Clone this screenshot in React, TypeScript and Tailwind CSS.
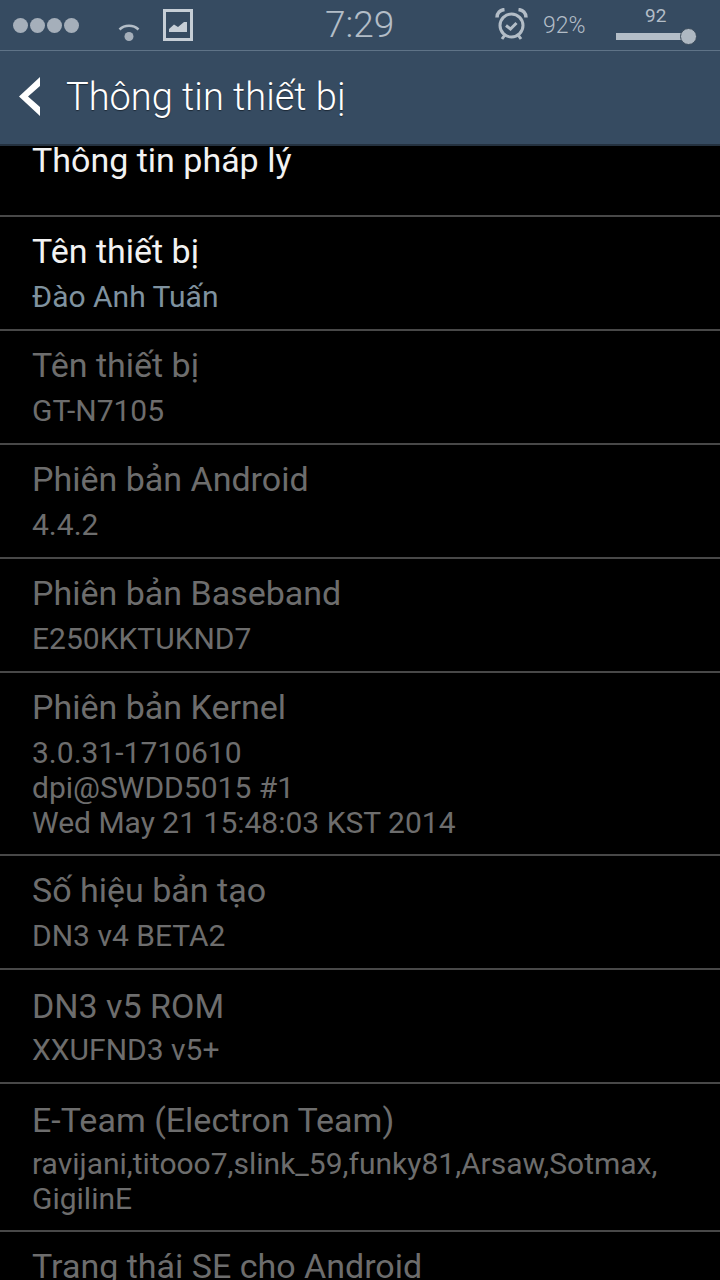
const rows = [
  { title: 'Tên thiết bị', lines: ['GT-N7105'] },
  { title: 'Phiên bản Android', lines: ['4.4.2'] },
  { title: 'Phiên bản Baseband', lines: ['E250KKTUKND7'] },
  { title: 'Phiên bản Kernel', lines: ['3.0.31-1710610', 'dpi@SWDD5015 #1', 'Wed May 21 15:48:03 KST 2014'] },
  { title: 'Số hiệu bản tạo', lines: ['DN3 v4 BETA2'] },
  { title: 'DN3 v5 ROM', lines: ['XXUFND3 v5+'], low: true },
  { title: 'E-Team (Electron Team)', lines: ['ravijani,titooo7,slink_59,funky81,Arsaw,Sotmax,', 'GigilinE'], low: true },
  { title: 'Trạng thái SE cho Android', lines: [] },
]

const StatusBar = () => (
  <div className="relative flex h-[51px] items-center border-b border-[#5f7387] text-[#b3bdc7]">
    {/* Signal */}
    <div className="ml-[13px] flex gap-[2px]">
      <div className="h-[15px] w-[15px] rounded-full bg-[#a5afba]" />
      <div className="h-[15px] w-[15px] rounded-full bg-[#a5afba]" />
      <div className="h-[15px] w-[15px] rounded-full bg-[#a5afba]" />
      <div className="h-[15px] w-[15px] rounded-full bg-[#a5afba]" />
    </div>
    {/* Wifi */}
    <svg className="ml-[39px] mt-[14px]" width="22" height="20" viewBox="0 0 22 20" fill="none">
      <path d="M1.5 7.5C6.5 2.5 15.5 2.5 20.5 7.5" stroke="#b3bdc7" strokeWidth="2.5" />
      <circle cx="11" cy="14.5" r="4.5" fill="#a5afba" />
    </svg>
    {/* Picture */}
    <svg className="ml-[23px] -mt-[1px]" width="30" height="32" viewBox="0 0 30 32" fill="none">
      <rect x="1.5" y="1.5" width="27" height="29" stroke="#c6ced6" strokeWidth="3" />
      <path d="M6 23L6 20L11 15.5L15 18L21 13L24 13L24 23Z" fill="#c6ced6" />
    </svg>
    <div className="absolute left-[325px] top-[5px] font-['Roboto',sans-serif] text-[37px] font-light leading-[40px]">7:29</div>
    {/* Alarm */}
    <svg className="ml-[302px] -mt-[2px]" width="33" height="33" viewBox="0 0 33 33" fill="none" stroke="#b3bdc7">
      <circle cx="16.5" cy="17.5" r="11.5" strokeWidth="3" />
      <path d="M11 17.5L15.5 21L21.5 15" strokeWidth="3" />
      <path d="M2 9.5C2 5 5 2 9.5 1.5M31 9.5C31 5 28 2 23.5 1.5" strokeWidth="3.5" />
      <path d="M7 31L9.5 27.5M26 31L23.5 27.5" strokeWidth="3" />
    </svg>
    <div className="ml-[15px] mt-[2px] font-['Roboto',sans-serif] text-[23px] font-light leading-[30px]">92%</div>
    <div className="absolute left-[645px] top-[6px] font-['Roboto',sans-serif] text-[19px] leading-[20px]">92</div>
    {/* Brightness slider */}
    <div className="absolute left-[616px] top-[28px] flex items-center">
      <div className="h-[7px] w-[66px] bg-[#b3bdc7]" />
      <div className="-ml-[2px] h-[17px] w-[17px] rounded-full border border-[#3a4a5a] bg-[#aeb8c2]" />
    </div>
  </div>
)

const TitleBar = () => (
  <div className="flex h-[95px] items-center border-b-2 border-[#24313f] pb-[1px]">
    <svg className="ml-[18px]" width="24" height="40" viewBox="0 0 24 40" fill="#ffffff">
      <path d="M22 0L22 9L10 19.5L22 30L22 39L1 19.5Z" />
    </svg>
    <div className="ml-[24px] font-['Roboto',sans-serif] text-[38px] font-light leading-[44px] text-white [text-shadow:0_1px_1px_#1c2835]">
      Thông tin thiết bị
    </div>
  </div>
)

export default function App() {
  return (
    <div className="flex h-[1280px] w-[720px] flex-col overflow-hidden bg-black font-['Roboto',sans-serif]">
      <div className="shrink-0 bg-[#364b61]">
        <StatusBar />
        <TitleBar />
      </div>
      <div className="flex flex-col">
        <div className="h-[71px] border-b-2 border-[#484848] pl-[32px] text-[34px] leading-[28px] text-[#f2f2f2]">
          Thông tin pháp lý
        </div>
        <div className="h-[114px] border-b-2 border-[#484848] pl-[32px] pt-[12px]">
          <div className="text-[34px] leading-[44px] text-[#f2f2f2]">Tên thiết bị</div>
          <div className="mt-[6px] text-[30px] leading-[35px] text-[#7f929f]">Đào Anh Tuấn</div>
        </div>
        {rows.map((row) => (
          <div
            key={row.title}
            className={row.low
              ? 'min-h-[114px] shrink-0 border-b-2 border-[#484848] pb-[14px] pl-[32px] pt-[14px]'
              : 'min-h-[114px] shrink-0 border-b-2 border-[#484848] pb-[14px] pl-[32px] pt-[12px]'}
          >
            <div className="text-[34px] leading-[44px] text-[#6d6d6d]">{row.title}</div>
            <div className={row.low ? 'mt-[4px]' : 'mt-[6px]'}>
              {row.lines.map((line) => (
                <div key={line} className="text-[30px] leading-[35px] text-[#6d6d6d]">{line}</div>
              ))}
            </div>
          </div>
        ))}
      </div>
    </div>
  )
}
